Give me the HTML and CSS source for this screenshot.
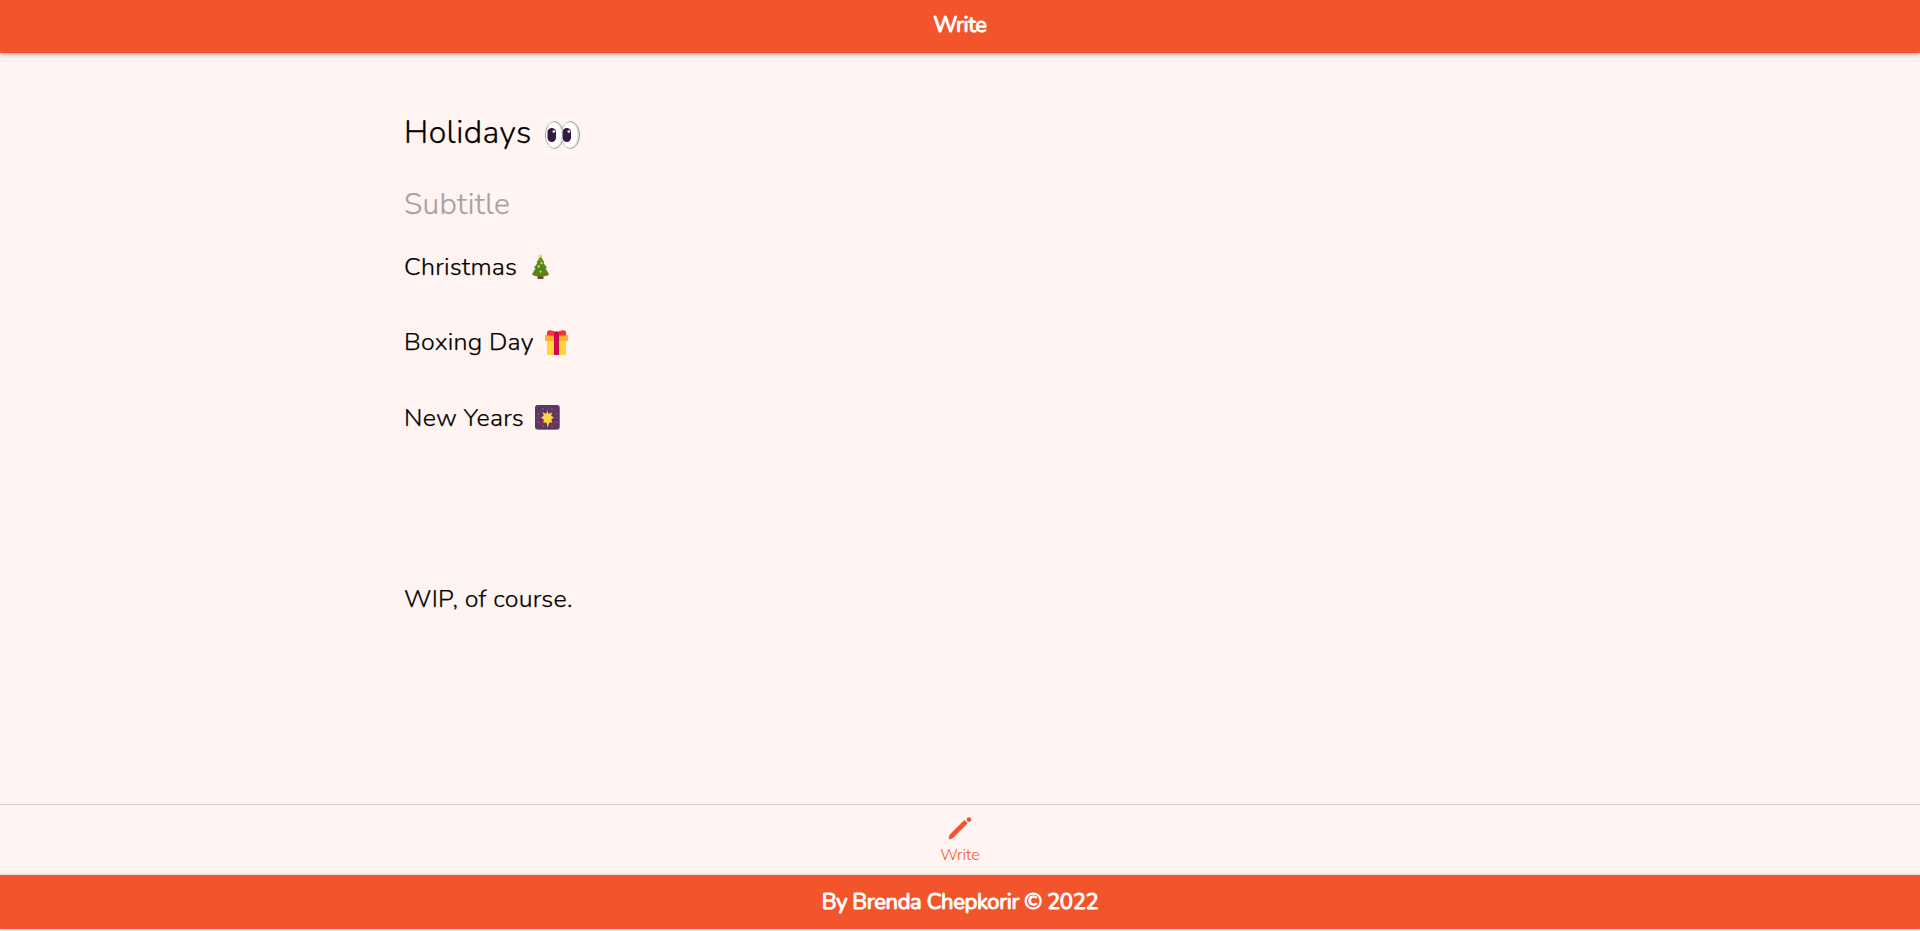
FILE: index.html
```html
<!DOCTYPE html>
<html lang="en">
<head>
<meta charset="utf-8">
<title>Write</title>
<link rel="stylesheet" href="styles.css">
</head>
<body>
<header class="bar top"><h1 class="bar-title">Write</h1></header>
<main class="editor">
  <div class="line title"><span class="holidays">Holidays</span>
    <svg class="eyes" viewBox="0 0 35 28"><g stroke="#9b9b9b"><ellipse cx="25.500" cy="14" rx="9" ry="13.400" fill="#e3e3e3"/><ellipse cx="9.500" cy="14" rx="9" ry="13.400" fill="#e3e3e3"/></g><ellipse cx="24.500" cy="14" rx="7.800" ry="12.800" fill="#fff"/><ellipse cx="8.700" cy="14" rx="7.700" ry="12.800" fill="#fff"/><rect x="2.500" y="7" width="8.500" height="14" rx="4.200" fill="#321b41"/><rect x="17.500" y="7" width="8.500" height="14" rx="4.200" fill="#321b41"/><circle cx="8.800" cy="10.500" r="1.300" fill="#fff"/><circle cx="23.800" cy="10.500" r="1.300" fill="#fff"/></svg>
  </div>
  <div class="line subtitle"><span>Subtitle</span></div>
  <div class="line item"><span class="christmas">Christmas</span>
    <svg class="tree" viewBox="0 0 17 25"><path d="M5.500 21h6v4h-6z" fill="#79483a"/><path d="M8.500 3L5 8.500l1 .5-3.500 4.500 1.500.8L.5 20q0 2 8 2t8-2L13 14.300l1.500-.8L11 9l1-.5z" fill="#448d1d" stroke="#448d1d" stroke-width=".8" stroke-linejoin="round"/><path d="M8.500 0l.7 1.500 1.600.2-1.200 1.100.3 1.500-1.400-.7-1.400.7.300-1.500-1.200-1.100 1.600-.2z" fill="#fcc32c"/><g fill="#f9cf35"><circle cx="9.500" cy="9" r="1.200"/><circle cx="6.800" cy="12.500" r="1.200"/><path d="M8.500 16l.5 1.300 1.200.5-1.200.5-.5 1.300-.5-1.300-1.200-.5 1.200-.5z"/><circle cx="8" cy="6.500" r=".6"/></g><g fill="#df3b26"><circle cx="11.500" cy="13" r="1.200"/><circle cx="4" cy="19.500" r="1.200"/><circle cx="13.500" cy="19.300" r="1.200"/></g></svg>
  </div>
  <div class="line item"><span class="boxing">Boxing Day</span>
    <svg class="gift" viewBox="0 0 23 25"><path d="M2 9h19v14.500q0 1.500-1.500 1.500h-16Q2 25 2 23.500z" fill="#ffd540"/><rect y="5" width="23" height="6" rx="1" fill="#ffae2d"/><path d="M2 5.500Q1 .2 5 .2q4 0 6.500 2.800Q14 .2 18 .2q4 0 3 5.300z" fill="#f93132"/><path d="M9 2.500Q11.500 0 14 2.500V25H9z" fill="#cb0b49"/></svg>
  </div>
  <div class="line item"><span class="newyears">New Years</span>
    <svg class="sparkler" viewBox="0 0 25 25"><rect width="25" height="25" rx="3" fill="#a58eaf"/><rect width="24.400" height="24.300" rx="3" fill="#573867"/><g stroke="#d3263e" stroke-width=".9"><path d="M12.500 2v5M1.500 12.800h5M18.500 12.800h5M4.500 5l4 4M20.500 5l-4 4M4.500 20.500l4-4M20.500 20.500l-4-4"/></g><path d="M12.300 6l1.300 2.800 3.400-1.300-.8 3.100 2.700 2.100-2.500 1.600.7 3.300-2.900-.2-1.400 5-1.400-5-3.100.4.500-3.200-2.700-1.900 2.600-2-1.100-3.400 3.500 1.500z" fill="#ffd23e"/><g fill="#96838f"><circle cx="3.500" cy="9" r=".7"/><circle cx="21.500" cy="9" r=".7"/><circle cx="3.500" cy="17" r=".7"/><circle cx="21.500" cy="17" r=".7"/><circle cx="8" cy="4" r=".7"/><circle cx="17" cy="4" r=".7"/><circle cx="8" cy="21" r=".7"/><circle cx="17" cy="21" r=".7"/></g></svg>
  </div>
  <div class="line item wip"><span>WIP, of course.</span></div>
</main>
<nav class="tabs">
  <a class="tab"><svg class="pen" viewBox="0 0 24 24"><path d="M1.200 20.800l1.200-3.500L15.600 4.200q.8-.8 1.700 0l1.200 1.200q.8.800 0 1.600L5.300 20.200l-3.200 1.700q-1.200.2-.9-1.100z" fill="#f2552c" stroke="#f2552c"/><circle cx="21" cy="2.600" r="2.300" fill="#f2552c"/></svg><span>Write</span></a>
</nav>
<footer class="bar bottom"><p class="bar-title credit">By Brenda Chepkorir © 2022</p></footer>
</body>
</html>
```
FILE: styles.css
```css
* { box-sizing: border-box; }
body {
  margin: 0;
  height: 931px;
  padding-bottom: 2px;
  display: flex;
  flex-direction: column;
  overflow: hidden;
  background: #fff4f1;
  color: #000;
  font-family: Nunito, Lato, sans-serif;
  font-weight: 300;
}
.bar {
  height: 53px;
  flex: none;
  display: flex;
  justify-content: center;
  background: #f2552c;
  color: #fff;
  box-shadow: 0 1px 5px rgba(0, 0, 0, .4);
}
.bottom { height: 54px; box-shadow: 0 0 3px rgba(0, 0, 0, .25); }
.bar-title {
  margin: 0;
  font-size: 22px;
  line-height: 51px;
  font-weight: 400;
  letter-spacing: -.38px;
  -webkit-text-stroke: 1px #fff;
}
.credit { line-height: 55px; }
.editor {
  flex: 1;
  width: 1112px;
  margin: 0 auto;
  padding-top: 49px;
}
.line {
  display: flex;
  align-items: center;
  white-space: nowrap;
  -webkit-text-stroke: .25px currentColor;
}
.line svg { flex: none; }
.title { height: 60px; font-size: 32px; letter-spacing: .44px; }
.subtitle { height: 85px; font-size: 30px; letter-spacing: .4px; color: #a7a19f; }
.item { height: 75.5px; font-size: 25px; letter-spacing: .23px; }
.subtitle + .item { margin-top: -18px; }
.wip { margin-top: 105.5px; }
.eyes { width: 35px; height: 28px; margin: 5px 0 0 13px; }
.tree { width: 17px; height: 25px; margin-left: 15px; }
.gift { width: 23px; height: 25px; margin-left: 11px; }
.sparkler { width: 25px; height: 25px; margin-left: 11px; }
.tabs {
  height: 71px;
  flex: none;
  border-top: 1px solid #d5cbc9;
  display: flex;
  justify-content: center;
}
.tab {
  display: flex;
  flex-direction: column;
  align-items: center;
  padding-top: 12px;
  color: #f2552c;
  font-size: 16px;
  font-weight: 300;
  line-height: 29px;
}
.pen { width: 24px; height: 24px; }
```
